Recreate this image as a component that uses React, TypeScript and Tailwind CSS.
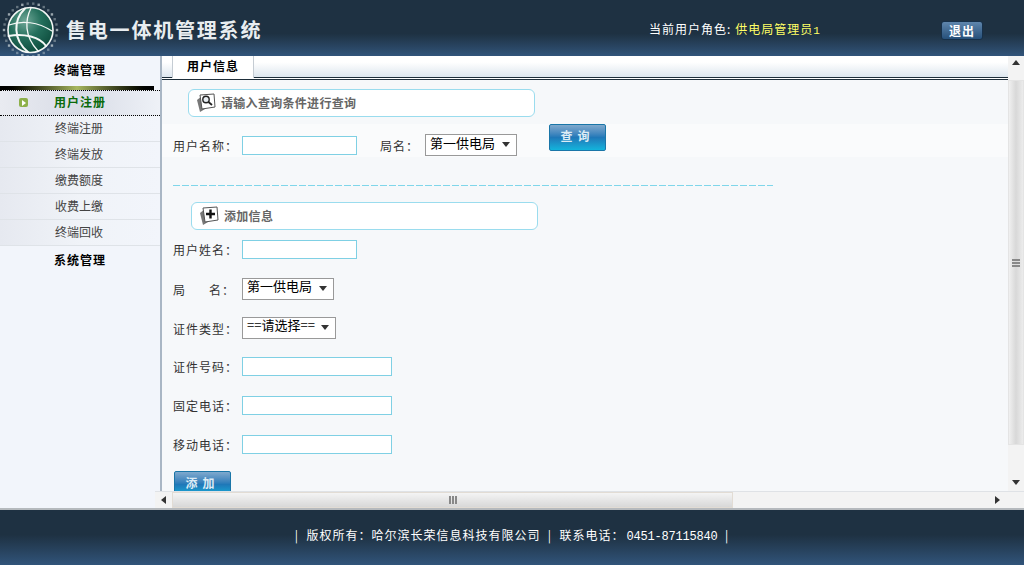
import React from "react";

const cjk = "font-['Noto_Sans_CJK_SC','Liberation_Sans',sans-serif]";

function Logo() {
  const dots = Array.from({ length: 30 }, (_, i) => {
    const a = (i / 30) * Math.PI * 2;
    return { x: 30.5 + Math.cos(a) * 26.5, y: 30 + Math.sin(a) * 26.5, o: i % 3 === 0 ? 0.7 : 0.4 };
  });
  return (
    <svg width="60" height="56" viewBox="0 0 60 56" className="shrink-0">
      <defs>
        <radialGradient id="globe" cx="0.38" cy="0.3" r="0.8">
          <stop offset="0" stopColor="#6fa797" />
          <stop offset="0.45" stopColor="#246f5c" />
          <stop offset="1" stopColor="#0a4638" />
        </radialGradient>
      </defs>
      {dots.map((d, i) => (
        <rect key={i} x={d.x - 1.2} y={d.y - 1.2} width="2.4" height="2.4" fill="#cfd9dc" opacity={d.o} />
      ))}
      <circle cx="30.5" cy="30" r="22.5" fill="url(#globe)" stroke="#f2f6f4" strokeWidth="1.6" />
      <g fill="none" stroke="#f4f8f6" strokeLinecap="round">
        <path d="M25 8.5C13 20 13 40 28 52" strokeWidth="2" />
        <path d="M31 8C25 20 24 36 38 51" strokeWidth="1.3" />
        <path d="M9 25C22 20 38 22 52 31" strokeWidth="1.2" />
        <path d="M8.5 36C24 33 40 37 46 46" strokeWidth="2" />
      </g>
    </svg>
  );
}

function SearchIcon() {
  return (
    <svg width="22" height="20" viewBox="0 0 22 20" className="shrink-0">
      <path d="M2 7 7 3l3 13-5 3Z" fill="#777" />
      <path d="M5 2 19 1l1 13-13 2Z" fill="#fff" stroke="#555" strokeWidth="1" />
      <circle cx="11" cy="6.5" r="3.2" fill="#e8eef3" stroke="#222" strokeWidth="1.4" />
      <path d="m13.5 9 3.5 3" stroke="#222" strokeWidth="1.8" />
    </svg>
  );
}

function PlusIcon() {
  return (
    <svg width="22" height="20" viewBox="0 0 22 20" className="shrink-0">
      <path d="M2 7 7 3l3 13-5 3Z" fill="#777" />
      <path d="M5 2 19 1l1 13-13 2Z" fill="#fff" stroke="#555" strokeWidth="1" />
      <path d="M12.5 3.5v9M8 8h9" stroke="#111" strokeWidth="2.4" />
    </svg>
  );
}

function SectionHead({ icon, label, left }: { icon: React.ReactNode; label: string; left: string }) {
  return (
    <div className={`${left} flex h-[28px] w-[347px] items-center gap-[4px] rounded-[6px] border border-[#9adcee] bg-white pl-[6px]`}>
      {icon}
      <span className="text-[12px] font-bold tracking-[0.3px] text-[#666]">{label}</span>
    </div>
  );
}

function Arrow({ dir }: { dir: "up" | "down" | "left" | "right" }) {
  const d = { up: "M4 1 8 6H0Z", down: "M0 1h8L4 6Z", left: "M6 0v8L1 4Z", right: "M1 0v8l5-4Z" }[dir];
  return (
    <svg width="8" height="8" viewBox="0 0 8 8">
      <path d={d} fill="#333" />
    </svg>
  );
}

function BlueButton({ label, className }: { label: string; className: string }) {
  return (
    <button className={`${className} h-[27px] w-[57px] rounded-[2px] border border-[#1a76a8] bg-gradient-to-b from-[#7fa9cd] via-[#1f78b8] to-[#12b4dc] pb-[3px] text-[12px] font-bold tracking-[5px] text-[#dcecf5]`}>
      {label}
    </button>
  );
}

function Select({ value, w }: { value: string; w: string }) {
  return (
    <div className={`${w} flex h-[22px] items-center justify-between border border-[#999] bg-white pb-[5px] pl-[4px] pr-[6px] text-[13px] text-black`}>
      <span>{value}</span>
      <span className="mt-[5px] flex"><Arrow dir="down" /></span>
    </div>
  );
}

function Field({ label, w, shift, children }: { label: React.ReactNode; w?: string; shift?: string; children?: React.ReactNode }) {
  return (
    <div className="flex h-[39px] items-center">
      <label className={`${shift ?? ""} w-[69px] whitespace-pre text-[12px] tracking-[1px] text-[#333]`}>{label}</label>
      {children ?? <input className={`${w} h-[19px] border border-[#7fd0e4] bg-white`} />}
    </div>
  );
}

const items = ["终端注册", "终端发放", "缴费额度", "收费上缴", "终端回收"];

export default function App() {
  return (
    <div className={`${cjk} flex h-[565px] w-[1024px] flex-col overflow-hidden bg-white`}>
      <header className="flex h-[56px] shrink-0 items-center bg-gradient-to-b from-[#1e3142] from-60% to-[#31547a]">
        <Logo />
        <h1 className="ml-[6px] mt-[3px] w-[583px] text-[20px] font-bold tracking-[1.8px] text-[#e8edf0]">售电一体机管理系统</h1>
        <div className="mt-[3px] w-[292px] text-[12px] tracking-[1px] text-white">
          当前用户角色:<span className="ml-[4px] text-[#ffff66]">供电局管理员<span className="font-['Liberation_Mono'] text-[11px]">1</span></span>
        </div>
        <button className="mt-[5px] h-[19px] w-[42px] rounded-[3px] border border-[#16304a] bg-gradient-to-b from-[#5f86ad] to-[#26507a] text-[12px] font-bold leading-none tracking-[1px] text-white">
          退出
        </button>
      </header>

      <div className="flex min-h-0 flex-1">
        <aside className="w-[162px] shrink-0 bg-[#f2f5fb]">
          <div className="flex h-[435px] flex-col border-r-2 border-[#a9b6c4]">
            <div className="flex h-[30px] shrink-0 items-center justify-center pb-[3px] text-[12px] font-bold tracking-[1px] text-black">终端管理</div>
            <div className="h-[4px] w-[154px] bg-gradient-to-r from-black via-[#a8b860] to-black" />
            <div className="relative flex h-[26px] items-center justify-center border-y border-dotted border-black bg-gradient-to-r from-[#e9ebf1] via-[#d8dce6] to-[#eef1f7] pb-[2px] text-[12px] font-bold tracking-[1px] text-[#0a6a0a]">
              <span className="absolute left-[19px] top-[7px] flex h-[9px] w-[9px] items-center justify-center rounded-[2px] bg-[#8db04a]">
                <span className="h-0 w-0 border-y-[3px] border-l-[4px] border-y-transparent border-l-white" />
              </span>
              用户注册
            </div>
            {items.map((t) => (
              <div key={t} className="flex h-[26px] items-center justify-center border-b border-[#dfe3e8] bg-gradient-to-r from-[#e6e9f0] via-[#f0f3f8] to-[#f2f5fb] pb-[2px] pr-[2px] text-[12px] text-[#444]">
                {t}
              </div>
            ))}
            <div className="flex h-[28px] items-center justify-center text-[12px] font-bold tracking-[1px] text-black">系统管理</div>
          </div>
        </aside>

        <div className="flex min-w-0 flex-1 flex-col">
          <div className="flex h-[435px] shrink-0">
            <main className="flex min-w-0 flex-1 flex-col bg-[#f6f8fa]">
              <div className="flex h-[24px] shrink-0 border-b-[3px] border-double border-b-[#1e2e3a] bg-gradient-to-b from-white from-30% to-[#dde6ee] pl-[10px]">
                <div className="flex h-[22px] w-[82px] items-center justify-center border-x border-[#c5ccd3] bg-white pb-[2px] text-[12px] font-bold tracking-[1px] text-black">用户信息</div>
              </div>
              <div className="min-h-0 flex-1 overflow-hidden">
                <div className="pt-[9px]">
                  <SectionHead icon={<SearchIcon />} label="请输入查询条件进行查询" left="ml-[26px]" />
                  <div className="mt-[7px] flex h-[33px] items-start bg-[#fafbfc] pl-[11px]">
                    <label className="mt-[13px] w-[69px] text-[12px] tracking-[1px] text-[#333]">用户名称：</label>
                    <input className="mt-[12px] h-[19px] w-[115px] border border-[#7fd0e4] bg-white" />
                    <label className="ml-[23px] mt-[13px] w-[45px] text-[12px] tracking-[1px] text-[#333]">局名：</label>
                    <div className="mt-[10px]"><Select value="第一供电局" w="w-[92px]" /></div>
                    <BlueButton label="查询" className="ml-[32px]" />
                  </div>
                  <div className="ml-[11px] mt-[28px] h-px w-[600px] bg-[repeating-linear-gradient(90deg,#7fd6ea_0_7px,transparent_7px_9px)]" />
                  <div className="mt-[16px]">
                    <SectionHead icon={<PlusIcon />} label="添加信息" left="ml-[29px]" />
                  </div>
                  <div className="pl-[11px]">
                    <Field label="用户姓名：" w="w-[115px]" />
                    <Field label={<>局<span className="ml-[23px]">名：</span></>} shift="mt-[3px]"><Select value="第一供电局" w="w-[92px]" /></Field>
                    <Field label="证件类型：" shift="mt-[3px]"><Select value="==请选择==" w="w-[94px]" /></Field>
                    <Field label="证件号码：" w="w-[150px]" />
                    <Field label="固定电话：" w="w-[150px]" />
                    <Field label="移动电话：" w="w-[150px]" />
                    <BlueButton label="添加" className="ml-[1px] mt-[7px]" />
                  </div>
                </div>
              </div>
            </main>
            <div className="flex w-[16px] shrink-0 flex-col items-stretch bg-[#f3f3f3]">
              <div className="flex h-[24px] items-center justify-center pb-[10px]"><Arrow dir="up" /></div>
              <div className="relative flex h-[365px] items-center justify-center border border-[#e4e4e4] bg-gradient-to-r from-[#f0f0f0] via-[#d8d8d8] to-[#ececec]">
                <div className="flex flex-col gap-[1px]">
                  <span className="h-[2px] w-[8px] bg-[#888]" />
                  <span className="h-[2px] w-[8px] bg-[#888]" />
                  <span className="h-[2px] w-[8px] bg-[#888]" />
                </div>
              </div>
              <div className="flex flex-1 items-end justify-center pb-[4px]"><Arrow dir="down" /></div>
            </div>
          </div>
          <div className="-ml-[7px] flex h-[17px] items-center border-t border-[#dfe2e6] bg-[#f3f3f3]">
            <div className="flex w-[17px] items-center justify-center"><Arrow dir="left" /></div>
            <div className="flex h-[16px] w-[561px] items-center justify-center border border-[#e2dcd4] bg-gradient-to-b from-[#f4f4f4] to-[#d8d8d8]">
              <div className="flex gap-[1px]">
                <span className="h-[8px] w-[2px] bg-[#888]" />
                <span className="h-[8px] w-[2px] bg-[#888]" />
                <span className="h-[8px] w-[2px] bg-[#888]" />
              </div>
            </div>
            <div className="flex-1" />
            <div className="mr-[22px] flex"><Arrow dir="right" /></div>
          </div>
        </div>
      </div>

      <footer className="flex h-[57px] shrink-0 items-center justify-center border-t-2 border-[#b5b9bd] bg-gradient-to-b from-[#1e3142] from-45% to-[#31547a] pb-[4px] text-[12px] tracking-[1px] text-white">
        <span className="whitespace-pre">
          |  版权所有：哈尔滨长荣信息科技有限公司  |  联系电话：<span className="ml-[2px] font-['Liberation_Mono'] tracking-[-0.2px]">0451-87115840</span>  |
        </span>
      </footer>
    </div>
  );
}
